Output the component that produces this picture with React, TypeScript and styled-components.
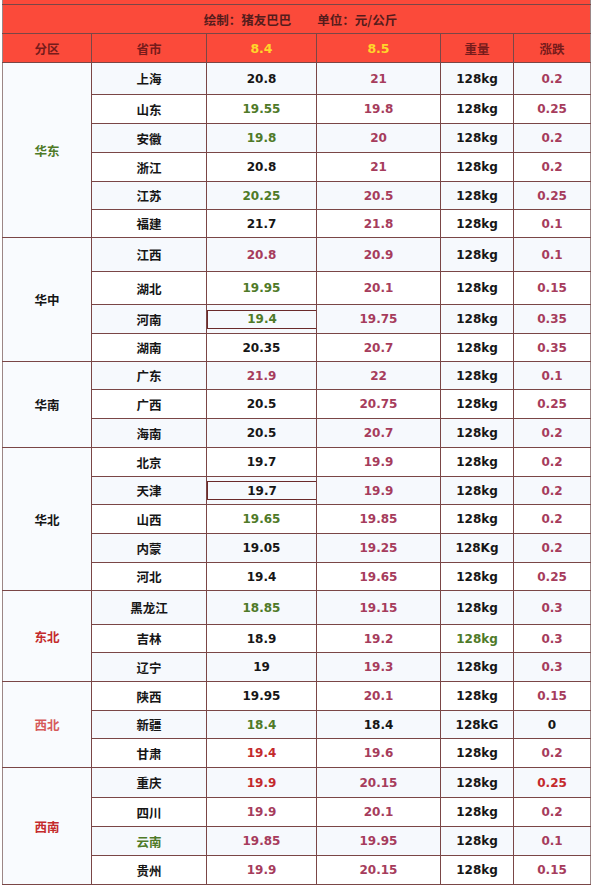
import React from "react";
import styled, { createGlobalStyle } from "styled-components";

const Global = createGlobalStyle`
  html, body { margin: 0; padding: 0; background: #ffffff; }
  body { font-family: "DejaVu Sans", "Noto Sans CJK SC", sans-serif; }
`;

type Tone = "k" | "g" | "p" | "r" | "lr";
const TONES: Record<Tone, string> = {
  k: "#161616",
  g: "#4f7a28",
  p: "#a63c5c",
  r: "#c42a2c",
  lr: "#d65a5a",
};

type Val = { v: string; t?: Tone; boxed?: boolean };
type Row = { city: string; cityTone?: Tone; a: Val; b: Val; w: Val; d: Val; h: number };
type Region = { name: string; tone: Tone; rows: Row[] };

const P = (v: string): Val => ({ v, t: "p" });
const K = (v: string): Val => ({ v, t: "k" });
const G = (v: string): Val => ({ v, t: "g" });
const R = (v: string): Val => ({ v, t: "r" });
const KG = K("128kg");

const DATA: Region[] = [
  {
    name: "华东",
    tone: "g",
    rows: [
      { city: "上海", a: K("20.8"), b: P("21"), w: KG, d: P("0.2"), h: 32 },
      { city: "山东", a: G("19.55"), b: P("19.8"), w: KG, d: P("0.25"), h: 29 },
      { city: "安徽", a: G("19.8"), b: P("20"), w: KG, d: P("0.2"), h: 29 },
      { city: "浙江", a: K("20.8"), b: P("21"), w: KG, d: P("0.2"), h: 29 },
      { city: "江苏", a: G("20.25"), b: P("20.5"), w: KG, d: P("0.25"), h: 28 },
      { city: "福建", a: K("21.7"), b: P("21.8"), w: KG, d: P("0.1"), h: 28 },
    ],
  },
  {
    name: "华中",
    tone: "k",
    rows: [
      { city: "江西", a: P("20.8"), b: P("20.9"), w: KG, d: P("0.1"), h: 34 },
      { city: "湖北", a: G("19.95"), b: P("20.1"), w: KG, d: P("0.15"), h: 33 },
      { city: "河南", a: { v: "19.4", t: "g", boxed: true }, b: P("19.75"), w: KG, d: P("0.35"), h: 29 },
      { city: "湖南", a: K("20.35"), b: P("20.7"), w: KG, d: P("0.35"), h: 28 },
    ],
  },
  {
    name: "华南",
    tone: "k",
    rows: [
      { city: "广东", a: P("21.9"), b: P("22"), w: KG, d: P("0.1"), h: 28 },
      { city: "广西", a: K("20.5"), b: P("20.75"), w: KG, d: P("0.25"), h: 29 },
      { city: "海南", a: K("20.5"), b: P("20.7"), w: KG, d: P("0.2"), h: 29 },
    ],
  },
  {
    name: "华北",
    tone: "k",
    rows: [
      { city: "北京", a: K("19.7"), b: P("19.9"), w: KG, d: P("0.2"), h: 29 },
      { city: "天津", a: { v: "19.7", t: "k", boxed: true }, b: P("19.9"), w: KG, d: P("0.2"), h: 28 },
      { city: "山西", a: G("19.65"), b: P("19.85"), w: KG, d: P("0.2"), h: 29 },
      { city: "内蒙", a: K("19.05"), b: P("19.25"), w: K("128Kg"), d: P("0.2"), h: 29 },
      { city: "河北", a: K("19.4"), b: P("19.65"), w: KG, d: P("0.25"), h: 28 },
    ],
  },
  {
    name: "东北",
    tone: "r",
    rows: [
      { city: "黑龙江", a: G("18.85"), b: P("19.15"), w: KG, d: P("0.3"), h: 34 },
      { city: "吉林", a: K("18.9"), b: P("19.2"), w: G("128kg"), d: P("0.3"), h: 28 },
      { city: "辽宁", a: K("19"), b: P("19.3"), w: KG, d: P("0.3"), h: 29 },
    ],
  },
  {
    name: "西北",
    tone: "lr",
    rows: [
      { city: "陕西", a: K("19.95"), b: P("20.1"), w: KG, d: P("0.15"), h: 29 },
      { city: "新疆", a: G("18.4"), b: K("18.4"), w: K("128kG"), d: K("0"), h: 28 },
      { city: "甘肃", a: R("19.4"), b: P("19.6"), w: KG, d: P("0.2"), h: 29 },
    ],
  },
  {
    name: "西南",
    tone: "r",
    rows: [
      { city: "重庆", a: R("19.9"), b: P("20.15"), w: KG, d: R("0.25"), h: 30 },
      { city: "四川", a: P("19.9"), b: P("20.1"), w: KG, d: P("0.2"), h: 29 },
      { city: "云南", cityTone: "g", a: P("19.85"), b: P("19.95"), w: KG, d: P("0.1"), h: 29 },
      { city: "贵州", a: P("19.9"), b: P("20.15"), w: KG, d: P("0.15"), h: 29 },
    ],
  },
];

const LINE = "#7a4646";

const Page = styled.div`
  width: 600px;
  padding: 0 10px 8px 2px;
  box-sizing: border-box;
`;

const Table = styled.table`
  width: 588px;
  border-collapse: collapse;
  table-layout: fixed;
  border-left: 1px solid #9c8686;
  border-right: 1px solid #9c8686;
  border-bottom: 1px solid ${LINE};
`;

const TopStrip = styled.tr`
  height: 4px;
  td {
    background: #fb4a3a;
    border-bottom: 1px solid ${LINE};
    padding: 0;
    height: 4px;
  }
`;

const TitleRow = styled.tr`
  height: 29px;
`;

const TitleCell = styled.td`
  background: #fb4a3a;
  border-bottom: 1px solid ${LINE};
  padding: 0;
`;

const TitleLine = styled.div`
  display: flex;
  justify-content: center;
  gap: 26px;
  font-family: "Noto Sans CJK SC", sans-serif;
  font-weight: 700;
  font-size: 12.5px;
  color: #551c1c;
  padding-left: 8px;
`;

const HeadRow = styled.tr`
  height: 29px;
`;

const HeadCell = styled.th<{ $yellow?: boolean }>`
  background: #fb4a3a;
  border: 1px solid ${LINE};
  border-top: none;
  padding: 0;
  font-family: ${(p) => (p.$yellow ? `"DejaVu Sans", sans-serif` : `"Noto Sans CJK SC", sans-serif`)};
  font-weight: 700;
  font-size: 12.5px;
  color: ${(p) => (p.$yellow ? "#ffd62a" : "#761b1b")};
  text-align: center;
  vertical-align: middle;
  &:first-child { border-left: none; }
  &:last-child { border-right: none; }
`;

const DataRow = styled.tr<{ $h: number; $alt: boolean }>`
  height: ${(p) => p.$h}px;
  background: ${(p) => (p.$alt ? "#f6f9fd" : "#ffffff")};
`;

const RegionCell = styled.td<{ $tone: Tone }>`
  background: #f9fbfe;
  border: 1px solid ${LINE};
  border-left: none;
  text-align: center;
  vertical-align: middle;
  font-family: "Noto Sans CJK SC", sans-serif;
  font-weight: 700;
  font-size: 12.5px;
  color: ${(p) => TONES[p.$tone]};
  padding: 0;
`;

const CityCell = styled.td<{ $tone: Tone }>`
  border: 1px solid ${LINE};
  text-align: center;
  vertical-align: middle;
  font-family: "Noto Sans CJK SC", sans-serif;
  font-weight: 700;
  font-size: 12.5px;
  color: ${(p) => TONES[p.$tone]};
  padding: 0;
`;

const NumCell = styled.td<{ $tone: Tone; $last?: boolean }>`
  border: 1px solid ${LINE};
  ${(p) => (p.$last ? "border-right: none;" : "")}
  text-align: center;
  vertical-align: middle;
  font-family: "DejaVu Sans", "Noto Sans CJK SC", sans-serif;
  font-weight: 700;
  font-size: 12px;
  color: ${(p) => TONES[p.$tone]};
  padding: 0;
`;

const Boxed = styled.div`
  margin: 0 -1px 0 0;
  height: 19px;
  display: flex;
  align-items: center;
  justify-content: center;
  border: 1px solid #6a2a2a;
  box-sizing: border-box;
`;

const cols = [89, 115, 110, 124, 73, 77];

function Num({ val, last }: { val: Val; last?: boolean }) {
  return (
    <NumCell $tone={val.t ?? "k"} $last={last}>
      {val.boxed ? <Boxed>{val.v}</Boxed> : val.v}
    </NumCell>
  );
}

export default function App() {
  let idx = 0;
  return (
    <Page>
      <Global />
      <Table>
        <colgroup>
          {cols.map((w, i) => (
            <col key={i} style={{ width: w }} />
          ))}
        </colgroup>
        <tbody>
          <TopStrip>
            <td colSpan={6} />
          </TopStrip>
          <TitleRow>
            <TitleCell colSpan={6}>
              <TitleLine>
                <span>绘制：猪友巴巴</span>
                <span>单位：元/公斤</span>
              </TitleLine>
            </TitleCell>
          </TitleRow>
          <HeadRow>
            <HeadCell>分区</HeadCell>
            <HeadCell>省市</HeadCell>
            <HeadCell $yellow>8.4</HeadCell>
            <HeadCell $yellow>8.5</HeadCell>
            <HeadCell>重量</HeadCell>
            <HeadCell>涨跌</HeadCell>
          </HeadRow>
          {DATA.map((region) =>
            region.rows.map((row, i) => {
              const alt = idx++ % 2 === 0;
              return (
                <DataRow key={region.name + row.city} $h={row.h} $alt={alt}>
                  {i === 0 && (
                    <RegionCell rowSpan={region.rows.length} $tone={region.tone}>
                      {region.name}
                    </RegionCell>
                  )}
                  <CityCell $tone={row.cityTone ?? "k"}>{row.city}</CityCell>
                  <Num val={row.a} />
                  <Num val={row.b} />
                  <Num val={row.w} />
                  <Num val={row.d} last />
                </DataRow>
              );
            })
          )}
        </tbody>
      </Table>
    </Page>
  );
}
